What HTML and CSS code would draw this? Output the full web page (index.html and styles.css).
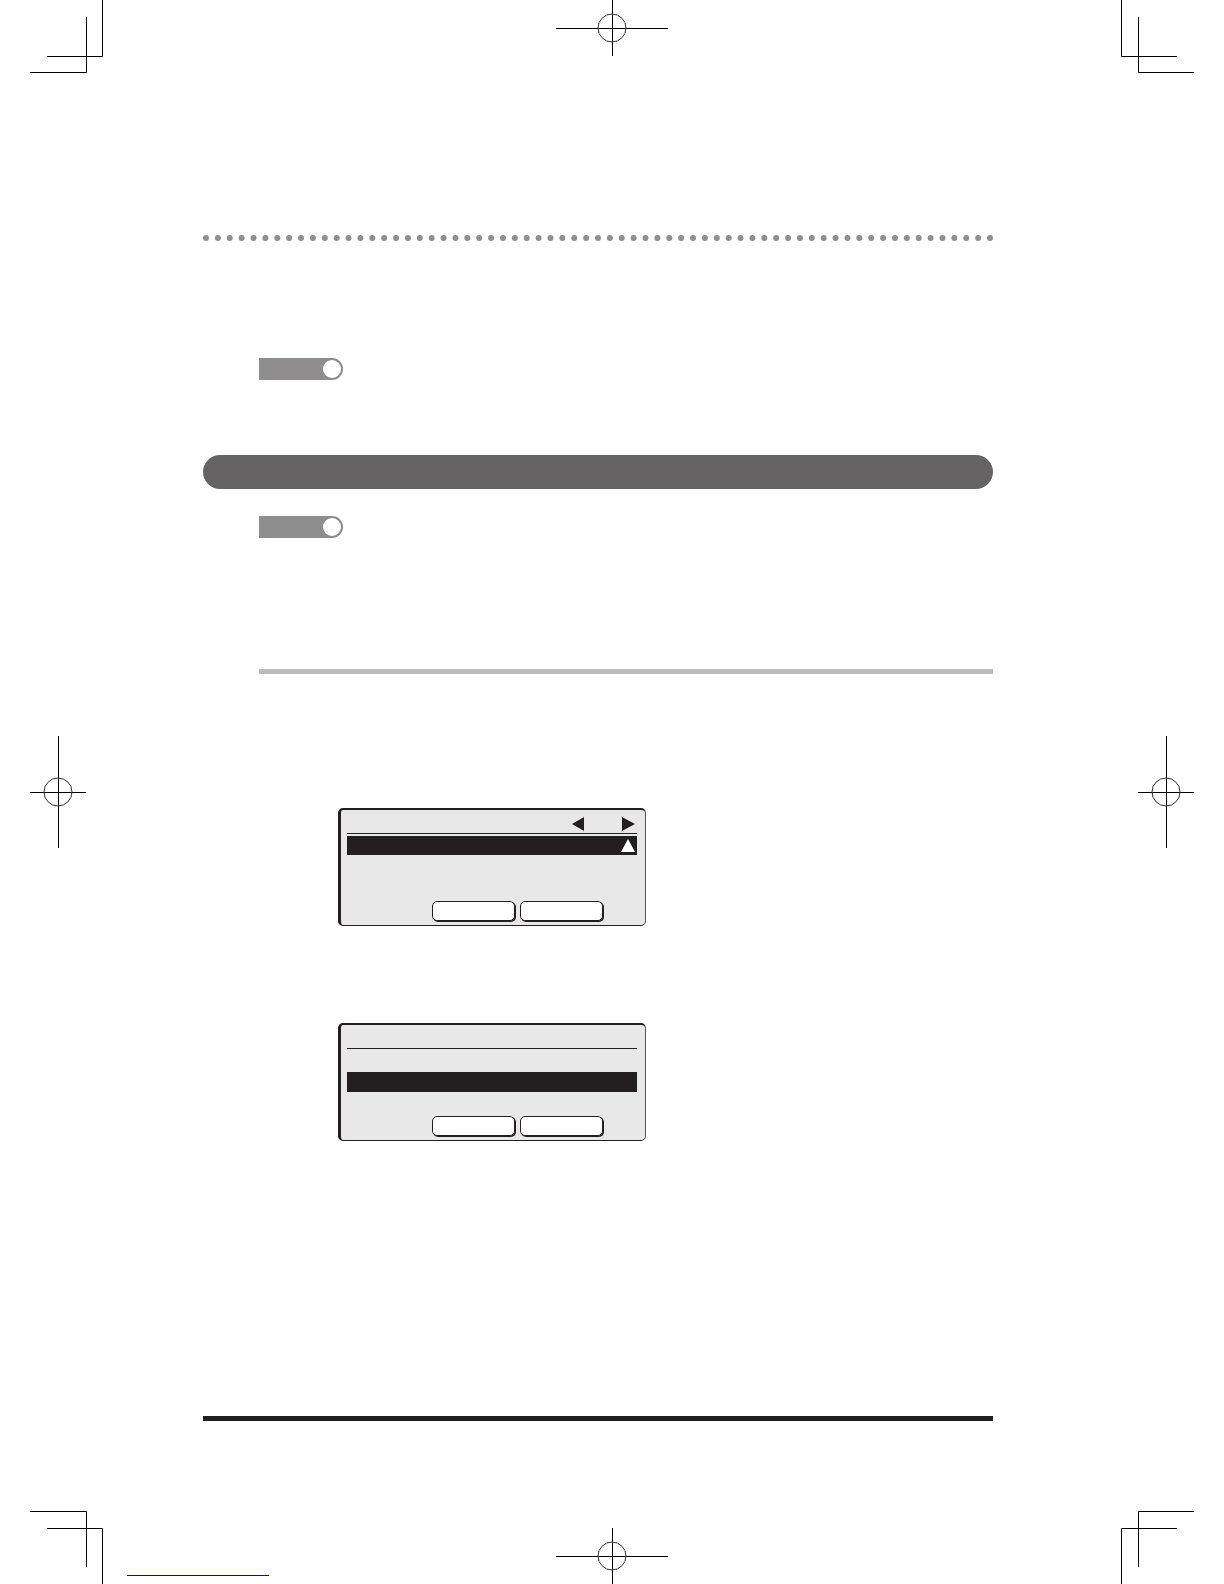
FILE: index.html
```html
<!DOCTYPE html>
<html lang="en">
<head>
<meta charset="utf-8">
<meta name="viewport" content="width=device-width, initial-scale=1">
<title>Manual page</title>
<link rel="stylesheet" href="styles.css">
</head>
<body>
<div class="sheet">
  <header class="marks">
    <svg class="mark" width="73" height="73" aria-hidden="true"><path d="M56.5 17V72.5H0M72.5 0V56.5H17"/></svg>
    <svg class="mark" width="112" height="56" aria-hidden="true"><path d="M56.5 0V56M0 28.5H112"/><circle cx="56" cy="28" r="14"/></svg>
    <svg class="mark mark-end" width="73" height="73" aria-hidden="true"><path d="M17.5 17V72.5H73M.5 0V56.5H56"/></svg>
  </header>

  <div class="middle">
    <svg class="mark" width="56" height="112" aria-hidden="true"><path d="M28.5 0V112M0 56.5H56"/><circle cx="28" cy="56" r="14"/></svg>
    <main class="content">
      <svg class="dots" height="6" aria-hidden="true"><line x1="0" y1="3" x2="100%" y2="3" pathLength="66"/><circle cx="100%" cy="3" r="3"/></svg>
      <div class="tag tag-intro"></div>
      <div class="heading-bar"></div>
      <div class="tag tag-section"></div>
      <hr class="rule">

      <section class="lcd lcd-first">
        <div class="lcd-title">
          <svg width="12" height="14" aria-hidden="true"><path d="M0 7L12 0V14Z"/></svg>
          <svg width="13" height="14" aria-hidden="true"><path d="M13 7L0 0V14Z"/></svg>
        </div>
        <div class="lcd-row lcd-row-top">
          <svg width="14" height="13" aria-hidden="true"><path d="M7 0L14 13H0Z"/></svg>
        </div>
        <div class="lcd-keys">
          <button class="key" type="button" aria-label="Left key"></button>
          <button class="key" type="button" aria-label="Right key"></button>
        </div>
      </section>

      <section class="lcd lcd-second">
        <div class="lcd-title"></div>
        <div class="lcd-row lcd-row-middle"></div>
        <div class="lcd-keys">
          <button class="key" type="button" aria-label="Left key"></button>
          <button class="key" type="button" aria-label="Right key"></button>
        </div>
      </section>
      <hr class="foot-rule">
    </main>
    <svg class="mark" width="56" height="112" aria-hidden="true"><path d="M28.5 0V112M0 56.5H56"/><circle cx="28" cy="56" r="14"/></svg>
  </div>

  <footer class="marks marks-bottom">
    <div class="foot-start">
      <svg class="mark" width="73" height="73" aria-hidden="true"><path d="M0 .5H56.5V56M17 17.5H72.5V73"/></svg>
      <a class="foot-link" href="#" aria-label="Website"></a>
    </div>
    <svg class="mark" width="112" height="56" aria-hidden="true"><path d="M56.5 0V56M0 28.5H112"/><circle cx="56" cy="28" r="14"/></svg>
    <svg class="mark mark-end" width="73" height="73" aria-hidden="true"><path d="M73 .5H17.5V56M56 17.5H.5V73"/></svg>
  </footer>
</div>
</body>
</html>
```
FILE: styles.css
```css
* {
  box-sizing: border-box;
}

body {
  margin: 0;
  background: #fff;
  color: #231f20;
  font-family: "Liberation Sans", sans-serif;
}

.sheet {
  display: grid;
  grid-template-rows: auto 1fr auto;
  min-height: 100vh;
  padding: 0 30px;
}

/* Printer's crop and registration marks */
.marks {
  display: grid;
  grid-template-columns: 1fr auto 1fr;
  align-items: start;
}

.marks-bottom {
  align-items: end;
}

.mark {
  display: block;
  flex: none;
  fill: none;
  stroke: #000;
}

.mark circle {
  stroke: #333;
}

.mark-end {
  justify-self: end;
}

.foot-start {
  display: flex;
  align-items: flex-end;
  gap: 24px;
}

.foot-link {
  width: 142px;
  height: 16px;
  margin-bottom: 8px;
  border-bottom: 1px solid #10108c;
}

.middle {
  display: flex;
  align-items: center;
}

.content {
  display: flex;
  flex: 1;
  flex-direction: column;
  align-self: stretch;
  padding: 162px 145px 90px 117px;
}

.dots {
  width: calc(100% - 6px);
  margin: 0 3px;
  overflow: visible;
  fill: #8f8f8f;
}

.dots line {
  stroke: #8f8f8f;
  stroke-width: 6px;
  stroke-linecap: round;
  stroke-dasharray: 0 1;
}

.tag {
  display: flex;
  align-items: center;
  justify-content: flex-end;
  width: 84px;
  height: 22px;
  margin-left: 56px;
  padding-right: 2px;
  border-radius: 0 11px 11px 0;
  background: #8f8d8e;
}

.tag::after {
  width: 18px;
  height: 18px;
  border-radius: 50%;
  background: #fff;
  content: "";
}

.tag-intro {
  margin-top: 117px;
}

.heading-bar {
  height: 34px;
  margin-top: 75px;
  border-radius: 17px;
  background: #656363;
}

.tag-section {
  margin-top: 27px;
}

.rule {
  align-self: stretch;
  height: 5px;
  margin: 131px 0 0 56px;
  border: 0;
  background: #bcbcbc;
}

.lcd {
  display: flex;
  flex-direction: column;
  width: 308px;
  height: 118px;
  margin-left: 135px;
  padding: 1px 8px 4px 6px;
  border: 1px solid #231f20;
  border-width: 2px 1px 1px 3px;
  border-right-color: #555;
  border-radius: 5px;
  background: #e8e8e8;
}

.lcd-first {
  margin-top: 134px;
}

.lcd-second {
  margin-top: 97px;
}

.lcd-title {
  display: flex;
  align-items: center;
  justify-content: flex-end;
  gap: 38px;
  height: 23px;
  padding: 5px 2px 1px;
  border-bottom: 1px solid #231f20;
  fill: #231f20;
}

.lcd-row {
  display: flex;
  align-items: center;
  justify-content: flex-end;
  height: 19px;
  padding-right: 2px;
  background: #231f20;
  fill: #fff;
}

.lcd-row-top {
  margin-top: 2px;
}

.lcd-row-middle {
  height: 20px;
  margin-top: 23px;
}

.lcd-keys {
  display: flex;
  gap: 5px;
  margin-top: auto;
  margin-left: 85px;
}

.key {
  width: 83px;
  height: 20px;
  padding: 0;
  border: 1px solid #231f20;
  border-radius: 5px;
  background: #fff;
  box-shadow: 1px 1px 0 #231f20;
}

.foot-rule {
  align-self: stretch;
  height: 5px;
  margin: 275px 0 0;
  border: 0;
  background: #231f20;
}
```
